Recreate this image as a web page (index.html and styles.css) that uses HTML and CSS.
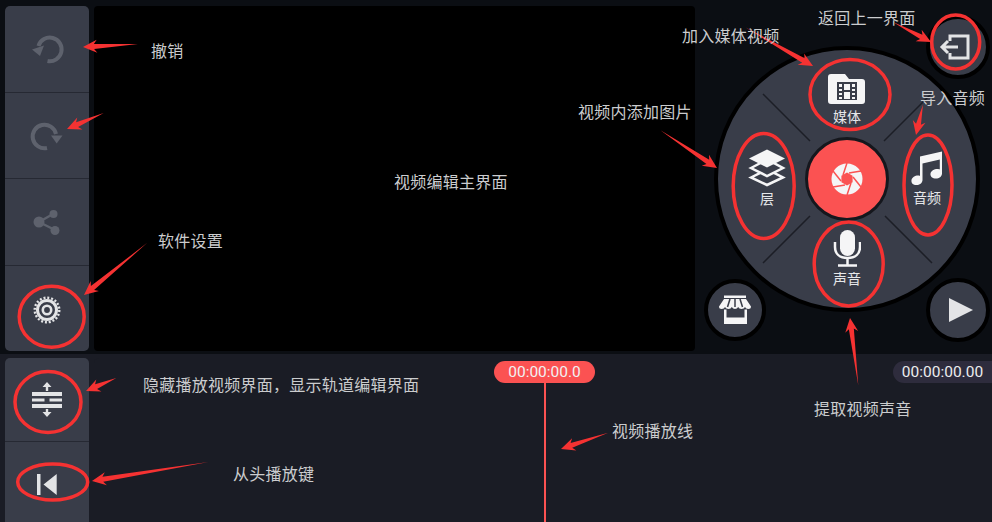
FILE: index.html
```html
<!DOCTYPE html>
<html lang="zh">
<head>
<meta charset="utf-8">
<title>视频编辑</title>
<link rel="stylesheet" href="styles.css">
</head>
<body>
<div class="app">
  <section class="main">
    <div class="rail rail-top">
      <div class="rail-btn">
        <svg class="ico" width="84" height="86" viewBox="5 6 84 86"><path class="soft-line" d="M38.500 46A11.800 11.800 0 1 1 47.500 61"/><path class="soft-fill" d="M32 49.500L44 45.500L40 56Z"/></svg>
      </div>
      <div class="rail-btn">
        <svg class="ico" width="84" height="86" viewBox="5 92 84 86"><path class="soft-line" d="M56 133A11.800 11.800 0 1 0 47 147"/><path class="soft-fill" d="M51 134.500H62.500L56.700 142.500Z"/></svg>
      </div>
      <div class="rail-btn">
        <svg class="ico" width="84" height="86" viewBox="5 178 84 86"><path class="share-line" d="M39 221L53 213M39 221L55 229"/><circle class="soft-fill" cx="39" cy="221" r="5.500"/><circle class="soft-fill" cx="53.500" cy="213" r="4"/><circle class="soft-fill" cx="55" cy="229.500" r="4.500"/></svg>
      </div>
      <div class="rail-btn">
        <svg class="ico" width="84" height="86" viewBox="5 265 84 86"><circle class="gear-teeth" cx="47" cy="309" r="12.300"/><circle class="gear-ring" cx="47" cy="309" r="9.500"/><circle class="gear-hub" cx="47" cy="309" r="4.200"/></svg>
      </div>
    </div>
    <div class="preview"></div>
    <div class="dock">
      <div class="wheel">
        <svg class="dividers" width="258" height="258" viewBox="718 50 258 258"><path d="M763 94L810 141M931 94L884 141M763 263L810 216M932 263L885 216"/></svg>
        <button class="tool tool-media">
          <svg width="38" height="31" viewBox="829 73 38 31"><path class="white" d="M829 76Q829 73 832 73H846L850 78H863Q866 78 866 81V100Q866 103 863 103H832Q829 103 829 100Z"/><path class="hole" fill-rule="evenodd" d="M838 81H858V99H838ZM840 83V86H843V83ZM840 88V90H843V88ZM840 92V94H843V92ZM840 96V98H843V96ZM853 83V86H856V83ZM853 88V90H856V88ZM853 92V94H856V92ZM853 96V98H856V96ZM845 83V89H851V83ZM845 91V98H851V91Z"/></svg>
          <span>媒体</span>
        </button>
        <button class="tool tool-layers">
          <svg width="38" height="38" viewBox="749 149.500 38 38"><path class="layer-line" d="M752 178L768 170L784 178L768 185.500Z"/><path class="layer-line" d="M752 168.500L768 160L784 168.500L768 176.500Z"/><path class="white" d="M750 159L768 150L786 159L768 168Z"/></svg>
          <span>层</span>
        </button>
        <div class="record">
          <svg width="34" height="34" viewBox="0 0 34 34">
            <circle class="white" cx="17" cy="17" r="15.500"/>
            <g class="blades"><path d="M17 1L13 13"/><path d="M31 9L19 11"/><path d="M31 25L23 15"/><path d="M17 33L21 21"/><path d="M3 25L15 23"/><path d="M3 9L11 19"/></g>
            <path class="red" d="M17 10.500L22.600 13.700V20.300L17 23.500L11.400 20.300V13.700Z"/>
          </svg>
        </div>
        <button class="tool tool-audio">
          <svg width="32" height="37" viewBox="912 150 32 37"><path class="white" d="M921 157.500L943 152.500V174.500C943 177.500 940 179.500 937 179.500C933.500 179.500 931 177.500 931.500 174.500C932 172 935 170 938.500 170C939.500 170 940.500 170.200 940.800 170.500V160.500L923.500 164.500V181C923.500 184 920.500 186 917.500 186C914 186 912 184 912.500 181C913 178.500 916 176.500 919 176.500C919.800 176.500 920.600 176.600 921 176.900Z"/></svg>
          <span>音频</span>
        </button>
        <button class="tool tool-voice">
          <svg width="28" height="37" viewBox="833 232 28 37"><rect class="white" x="840" y="232" width="15" height="26" rx="7.500"/><path class="mic-line" d="M835 244V249C835 256 840 260 847.500 260C855 260 860 256 860 249V244M847.500 260V267M838 267.500H857"/></svg>
          <span>声音</span>
        </button>
      </div>
      <button class="round round-back">
        <svg width="40" height="40" viewBox="938 27 40 40"><path class="back-line" d="M950 41V36H968V58H950V53M958 47H942M948 41L942 47L948 53"/></svg>
      </button>
      <button class="round round-store">
        <svg width="36" height="36" viewBox="717 292 36 36"><path class="white" d="M724 295.500H746V298H724Z"/><path class="white" d="M724 299H746L751 306.500Q751 309 748.300 309Q745.800 309 745 307Q744 309 741.500 309Q739 309 738.200 307Q737 309 735 309Q733 309 731.800 307Q731 309 728.500 309Q726 309 725 307Q724.200 309 721.700 309Q719 309 719 306.500Z"/><g class="awning-gaps"><path d="M730 299L727.500 307"/><path d="M735 299V307"/><path d="M740 299L742.500 307"/></g><path class="white" fill-rule="evenodd" d="M724 309.500H747V324H724ZM726.500 309.500V317.500H744.500V309.500Z"/></svg>
      </button>
      <button class="round round-play">
        <svg width="30" height="30" viewBox="943 295 30 30"><path class="play" d="M949 298L973 310L949 322Z"/></svg>
      </button>
    </div>
  </section>
  <section class="timeline">
    <div class="rail rail-bottom">
      <div class="rail-btn rail-btn-hide">
        <svg class="ico" width="84" height="83" viewBox="5 358 84 83"><path class="white-soft" d="M47 382L51.500 387H48.200V391H45.800V387H42.500ZM32 392H62V396H32ZM32 398.500H44.500V401.500H32ZM49.500 398.500H62V401.500H49.500ZM32 404H62V408H32ZM47 417L42.500 412H45.800V409H48.200V412H51.500Z"/></svg>
      </div>
      <div class="rail-btn rail-btn-start">
        <svg class="ico" width="84" height="81" viewBox="5 441 84 81"><path class="white-soft" d="M37 473H40.500V494H37ZM56.700 473V494L43.500 483.500Z"/></svg>
      </div>
    </div>
    <div class="track">
      <div class="playhead"><span class="pill pill-red">00:00:00.0</span><i class="head-line"></i></div>
      <span class="pill pill-dark">00:00:00.00</span>
    </div>
  </section>

  <svg class="marks" width="992" height="522" viewBox="0 0 992 522">
    <ellipse cx="51.700" cy="316.700" rx="32.500" ry="30.500"/>
    <ellipse cx="48" cy="402" rx="33" ry="30.500"/>
    <ellipse cx="52.700" cy="482" rx="35" ry="18"/>
    <ellipse cx="955.700" cy="42" rx="24" ry="27"/>
    <ellipse cx="850" cy="94.500" rx="40" ry="35"/>
    <ellipse cx="763.700" cy="186" rx="30.500" ry="52.500"/>
    <ellipse cx="928" cy="185" rx="24" ry="50"/>
    <ellipse cx="848.700" cy="264" rx="34.500" ry="42"/>
    <polygon transform="translate(83 47) rotate(177)" points="-55,0 -11,-2.500 -14,-6.500 0,0 -14,6.500 -11,2.500"/>
    <polygon transform="translate(67 129) rotate(156.600)" points="-40,0 -11,-2.500 -14,-6.500 0,0 -14,6.500 -11,2.500"/>
    <polygon transform="translate(84 295) rotate(140.500)" points="-82,0 -11,-2.500 -14,-6.500 0,0 -14,6.500 -11,2.500"/>
    <polygon transform="translate(86 391) rotate(156.600)" points="-33,0 -11,-2.500 -14,-6.500 0,0 -14,6.500 -11,2.500"/>
    <polygon transform="translate(92 481) rotate(170.700)" points="-118,0 -11,-2.500 -14,-6.500 0,0 -14,6.500 -11,2.500"/>
    <polygon transform="translate(561 449) rotate(161)" points="-50,0 -11,-2.500 -14,-6.500 0,0 -14,6.500 -11,2.500"/>
    <polygon transform="translate(850 318) rotate(263)" points="-68,0 -11,-2.500 -14,-6.500 0,0 -14,6.500 -11,2.500"/>
    <polygon transform="translate(931 42) rotate(27.800)" points="-43,0 -11,-2.500 -14,-6.500 0,0 -14,6.500 -11,2.500"/>
    <polygon transform="translate(813 66) rotate(29.800)" points="-78,0 -11,-2.500 -14,-6.500 0,0 -14,6.500 -11,2.500"/>
    <polygon transform="translate(916 135) rotate(103)" points="-31,0 -11,-2.500 -14,-6.500 0,0 -14,6.500 -11,2.500"/>
    <polygon transform="translate(717 168) rotate(33.700)" points="-68,0 -11,-2.500 -14,-6.500 0,0 -14,6.500 -11,2.500"/>
  </svg>

  <div class="notes">
    <span class="note note-undo">撤销</span>
    <span class="note note-main">视频编辑主界面</span>
    <span class="note note-settings">软件设置</span>
    <span class="note note-hide">隐藏播放视频界面，显示轨道编辑界面</span>
    <span class="note note-start">从头播放键</span>
    <span class="note note-line">视频播放线</span>
    <span class="note note-sound">提取视频声音</span>
    <span class="note note-audio">导入音频</span>
    <span class="note note-back">返回上一界面</span>
    <span class="note note-media">加入媒体视频</span>
    <span class="note note-picture">视频内添加图片</span>
  </div>
</div>
</body>
</html>
```

FILE: styles.css
```css
* { box-sizing: border-box; }
html, body { margin: 0; padding: 0; height: 100%; overflow: hidden; background: #0b0e13; }
body { font-family: "Noto Sans CJK SC", "Noto Sans", sans-serif; }

.app { position: relative; width: 992px; height: 522px; display: flex; flex-direction: column; }

.main { display: flex; gap: 5px; height: 354px; padding: 6px 0 3px 5px; background: #0b0e13; }
.timeline { display: flex; gap: 5px; flex: 1; padding: 4px 0 0 5px; background: #1a1c25; }

.rail { width: 84px; flex: none; display: flex; flex-direction: column; border-radius: 5px; background: #393d49; overflow: hidden; }
.rail-top { height: 345px; }
.rail-btn { height: 86.500px; border-bottom: 1px solid #262933; }
.rail-btn:last-child { border-bottom: 0; }
.rail-btn-hide { height: 84px; }
.rail-btn-start { flex: 1; }
.rail-bottom { border-radius: 5px 5px 0 0; }
.ico { display: block; }

.preview { width: 601px; flex: none; background: #000; border-radius: 4px; }

.dock { position: relative; flex: 1; }
.wheel { position: absolute; left: 14px; top: 40px; width: 266px; height: 266px; padding: 11px; display: grid; grid-template-columns: 76px 84px 76px; grid-template-rows: 76px 84px 76px; place-items: center; border: 4px solid #000; border-radius: 50%; background: #393d49; }
.dividers { position: absolute; left: 0; top: 0; }
.dividers path { fill: none; stroke: #1c1e26; stroke-width: 1.500; }

.tool { position: relative; display: flex; flex-direction: column; align-items: center; gap: 1px; padding: 0; border: 0; background: none; color: #e6e7e9; font: 14px/20px "Noto Sans CJK SC", sans-serif; }
.tool svg { display: block; }
.tool-media { grid-column: 2; grid-row: 1; top: 1px; }
.tool-layers { grid-column: 1; grid-row: 2; top: -1px; }
.tool-audio { grid-column: 3; grid-row: 2; top: -1px; }
.tool-voice { grid-column: 2; grid-row: 3; }
.record { grid-column: 2; grid-row: 2; width: 84px; height: 84px; flex: none; display: flex; align-items: center; justify-content: center; border: 3px solid #15171d; border-radius: 50%; background: #fb5252; }
.record svg { display: block; }
.white { fill: #f5f5f6; }
.red { fill: #fb5252; }
.blades path { stroke: #fb5252; stroke-width: 1.500; fill: none; }
.hole { fill: #393d49; }
.layer-line { fill: #393d49; stroke: #f5f5f6; stroke-width: 2.500; stroke-linejoin: miter; }
.mic-line { fill: none; stroke: #f5f5f6; stroke-width: 2.500; }
.awning-gaps path { stroke: #393d49; stroke-width: 1.500; fill: none; }

.round { position: absolute; display: flex; align-items: center; justify-content: center; padding: 0; border: 4px solid #000; border-radius: 50%; background: #393d49; }
.round svg { display: block; }
.round-back { left: 226px; top: 9px; width: 64px; height: 64px; }
.round-store { left: 4px; top: 273px; width: 62px; height: 62px; }
.round-play { left: 226px; top: 272px; width: 64px; height: 64px; }
.back-line { fill: none; stroke: #e3e4e6; stroke-width: 3; }
.play { fill: #e3e4e6; }

.soft-line { fill: none; stroke: #5e626d; stroke-width: 4; }
.share-line { fill: none; stroke: #5e626d; stroke-width: 2.500; }
.soft-fill { fill: #5e626d; }
.gear-teeth { fill: none; stroke: #e3e4e6; stroke-width: 2.400; stroke-dasharray: 2 1.860; }
.gear-ring { fill: #393d49; stroke: #e3e4e6; stroke-width: 3; }
.gear-hub { fill: #393d49; stroke: #e3e4e6; stroke-width: 2.600; }
.white-soft { fill: #e3e4e6; }

.track { position: relative; flex: 1; background: #1a1c25; border-radius: 5px 0 0 0; }
.playhead { position: absolute; left: 400px; top: 3px; width: 101px; display: flex; flex-direction: column; align-items: center; height: 161px; }
.pill { display: flex; align-items: center; justify-content: center; height: 22px; border-radius: 11px; color: #f1f1f3; font: 15.500px/22px Roboto, sans-serif; white-space: nowrap; }
.pill-red { width: 101px; flex: none; background: #fb5252; }
.head-line { flex: 1; width: 2px; background: #fb5252; }
.pill-dark { position: absolute; right: 0; top: 3px; width: 99px; border-radius: 11px 0 0 11px; background: #2e2c3d; color: #ececee; }

.marks { position: absolute; left: 0; top: 0; pointer-events: none; }
.marks ellipse { fill: none; stroke: #f53232; stroke-width: 3.500; }
.marks polygon { fill: #f53232; }

.notes { position: absolute; inset: 0; pointer-events: none; }
.note { position: absolute; color: #cbccce; font-size: 16px; line-height: 20px; letter-spacing: 0.25px; white-space: nowrap; }
.note-undo { left: 151px; top: 40px; }
.note-main { left: 394px; top: 171px; }
.note-settings { left: 158px; top: 230px; }
.note-hide { left: 143px; top: 374px; }
.note-start { left: 233px; top: 463px; }
.note-line { left: 612px; top: 420px; }
.note-sound { left: 814px; top: 398px; }
.note-audio { left: 920px; top: 87px; }
.note-back { left: 818px; top: 7px; }
.note-media { left: 682px; top: 25px; }
.note-picture { left: 578px; top: 101px; }
```
